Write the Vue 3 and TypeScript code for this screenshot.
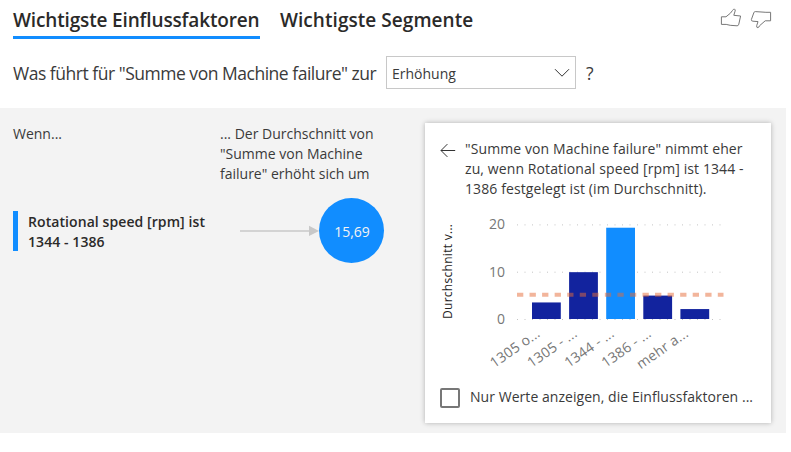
<script setup lang="ts">
interface Bar {
  label: string
  value: number
  selected?: boolean
}

const bars: Bar[] = [
  { label: '1305 o...', value: 3.5 },
  { label: '1305 - ...', value: 9.9 },
  { label: '1344 - ...', value: 19.3, selected: true },
  { label: '1386 - ...', value: 4.95 },
  { label: 'mehr a...', value: 2.1 },
]
const ticks = [20, 10, 0]
const average = 5.15

// Chart coordinates, relative to the top left of the plot svg
const baseline = 106
const yOf = (v: number): number => baseline - v * 4.73
const xOf = (i: number): number => 92 + i * 37.1
</script>

<template>
  <main class="visual">
    <header class="head">
      <nav class="tabs">
        <a class="tab active">Wichtigste Einflussfaktoren</a>
        <a class="tab second">Wichtigste Segmente</a>
      </nav>
      <div class="feedback">
        <svg width="22" height="22" viewBox="0 0 22 22">
          <path d="M1.4 8.8H6L10.4 5.2L12.4 2.6Q13.4.8 14.6 1.2Q15.6 1.6 15.1 3.1L13.8 7.3L20.6 8L18.8 16.2Q18.4 17.8 17.1 17.8L10.2 17.3L6.2 16.4H1.4Z" />
        </svg>
        <svg width="22" height="22" viewBox="0 0 22 22">
          <path d="M20.6 4.3H15.9L5.3 3.6Q4.2 3.5 3.8 4.8L1.4 11.5Q1.2 13.2 2.9 13.2L8 13.6L6.7 17.7Q6.4 19.8 7.9 19.7Q8.8 19.6 9.6 17.7L15.2 12.8H20.6Z" />
        </svg>
      </div>
    </header>

    <section class="question">
      <span class="ask">Was führt für "Summe von Machine failure" zur</span>
      <div class="select">
        <span>Erhöhung</span>
        <svg width="16" height="10" viewBox="0 0 16 10"><path d="M1 1.2L8 8.2L15 1.2" /></svg>
      </div>
      <span class="mark">?</span>
    </section>

    <section class="panel">
      <div class="influencers">
        <div class="columns">
          <p class="when">Wenn...</p>
          <p class="effect">... Der Durchschnitt von<br />"Summe von Machine<br />failure" erhöht sich um</p>
        </div>
        <div class="row">
          <p class="factor">Rotational speed [rpm] ist<br />1344 - 1386</p>
          <svg class="arrow" width="79" height="12" viewBox="0 0 79 12">
            <path d="M0 6H70" stroke="#c8c8c8" stroke-width="1.5" />
            <path d="M69 .7L79 5.9L69 11Z" fill="#c8c8c8" />
          </svg>
          <div class="bubble">15,69</div>
        </div>
      </div>

      <article class="card">
        <div class="title">
          <svg width="16" height="14" viewBox="0 0 16 14"><path d="M15.2 6.5H1M7.4.1L1 6.5L7.4 12.9" /></svg>
          <p>"Summe von Machine failure" nimmt eher<br />zu, wenn Rotational speed [rpm] ist 1344 -<br />1386 festgelegt ist (im Durchschnitt).</p>
        </div>

        <svg class="chart" width="316" height="164" viewBox="0 0 316 164">
          <text class="axis-title" transform="translate(11.5 106) rotate(-90)" textLength="95" lengthAdjust="spacing">Durchschnitt v...</text>
          <g v-for="t in ticks" :key="t">
            <text class="tick" x="65" :y="yOf(t) + 5" text-anchor="end">{{ t }}</text>
            <line class="grid" x1="77" x2="283" :y1="yOf(t) + 0.5" :y2="yOf(t) + 0.5" />
          </g>
          <rect
            v-for="(b, i) in bars"
            :key="b.label"
            :x="xOf(i)"
            :y="yOf(b.value)"
            width="28.8"
            :height="b.value * 4.73"
            :fill="b.selected ? '#118dff' : '#12239e'"
          />
          <line class="average" x1="77" x2="283.5" :y1="yOf(average) + 0.2" :y2="yOf(average) + 0.2" />
          <text
            v-for="(b, i) in bars"
            :key="b.label"
            class="category"
            text-anchor="end"
            :transform="`translate(${xOf(i) + 9} 122.5) rotate(-35)`"
          >{{ b.label }}</text>
        </svg>

        <label class="filter">
          <span class="box"></span>
          <span class="filter-text">Nur Werte anzeigen, die Einflussfaktoren ...</span>
        </label>
      </article>
    </section>
  </main>
</template>

<style>
body {
  margin: 0;
  background: #fff;
}
</style>

<style scoped>
.visual {
  width: 786px;
  height: 452px;
  font-family: 'Open Sans', 'Noto Sans', sans-serif;
  font-size: 14px;
  line-height: 20px;
  color: #3a3a3a;
}
p {
  margin: 0;
  white-space: nowrap;
}
svg {
  display: block;
  flex: none;
  fill: none;
  overflow: visible;
}
.head {
  display: flex;
  justify-content: space-between;
  height: 39px;
  padding: 0 14px 0 13px;
}
.tabs {
  display: flex;
  gap: 20px;
}
.tab {
  box-sizing: border-box;
  height: 39px;
  padding-top: 8px;
  font-size: 19px;
  line-height: 24px;
  font-weight: 600;
  letter-spacing: -0.15px;
  color: #2b2a29;
  white-space: nowrap;
}
.second {
  letter-spacing: 0.05px;
}
.active {
  width: 247px;
  border-bottom: 3px solid #118dff;
}
.feedback {
  display: flex;
  gap: 8px;
  padding-top: 8px;
}
.feedback path {
  stroke: #777;
  stroke-width: 1;
}
.question {
  display: flex;
  align-items: center;
  height: 33px;
  padding: 17px 0 19px 13px;
}
.ask {
  width: 373px;
  font-size: 17.5px;
  letter-spacing: -0.48px;
  white-space: nowrap;
}
.select {
  display: flex;
  align-items: center;
  justify-content: space-between;
  box-sizing: border-box;
  width: 190px;
  height: 33px;
  padding: 0 5px;
  border: 1px solid #c8c8c8;
}
.select span {
  padding-top: 2px;
}
.select path,
.title path {
  stroke: #333;
  stroke-width: 1;
}
.mark {
  margin-left: 10px;
  font-size: 17.5px;
}
.panel {
  display: flex;
  justify-content: space-between;
  box-sizing: border-box;
  height: 325px;
  padding: 15px 15px 10px 13px;
  background: #f3f3f3;
}
.influencers {
  width: 372px;
}
.columns {
  display: flex;
  box-sizing: border-box;
  height: 75px;
  padding-top: 1px;
}
.when {
  width: 207px;
}
.row {
  display: flex;
  align-items: center;
  height: 65px;
}
.factor {
  box-sizing: border-box;
  width: 227px;
  height: 40px;
  padding: 1px 0 0 10px;
  border-left: 5px solid #118dff;
  font-weight: 600;
  letter-spacing: 0.08px;
  color: #2b2a29;
}
.bubble {
  width: 65px;
  height: 65px;
  border-radius: 50%;
  background: #118dff;
  color: #f3f3f3;
  line-height: 67px;
  text-align: center;
  text-indent: 1px;
}
.card {
  box-sizing: border-box;
  width: 346px;
  height: 300px;
  padding: 16px 15px;
  background: #fff;
  box-shadow: 0 0 5px rgba(0, 0, 0, 0.28);
}
.title {
  display: flex;
  gap: 9px;
  height: 74px;
  letter-spacing: 0.1px;
}
.title svg {
  margin-top: 5px;
}
.tick,
.category {
  font-size: 14px;
  fill: #777;
}
.category {
  letter-spacing: 0.2px;
}
.axis-title {
  font-size: 12px;
  fill: #252423;
}
.grid {
  stroke: #c4c4c4;
  stroke-width: 1;
  stroke-dasharray: 1 6.5;
}
.average {
  stroke: #e66c37;
  stroke-opacity: 0.5;
  stroke-width: 4;
  stroke-dasharray: 6.3 6.25;
}
.filter {
  display: flex;
  align-items: center;
  gap: 10px;
  height: 20px;
  margin-top: 10.5px;
}
.box {
  box-sizing: border-box;
  width: 20px;
  height: 20px;
  border: 2px solid #777;
  border-radius: 2px;
}
.filter-text {
  padding-bottom: 1px;
  white-space: nowrap;
  letter-spacing: 0.05px;
}
</style>
